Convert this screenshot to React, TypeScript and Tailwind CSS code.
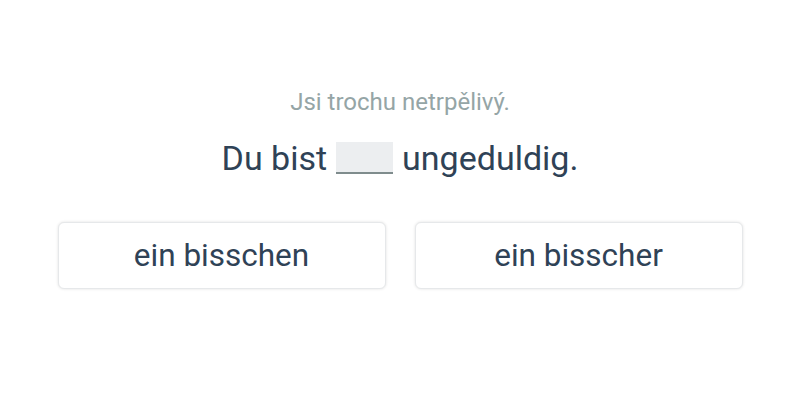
export default function App() {
  return (
    <div className="flex h-[400px] w-[800px] flex-col items-center bg-white font-['Roboto',sans-serif]">
      <p className="mt-[87px] text-[24px] leading-[30px] text-[#95a5a6]">Jsi trochu netrpělivý.</p>
      <div className="mt-[21px] flex h-[40px] items-center text-[34px] leading-[40px] text-[#2f4256]">
        <span>Du bist</span>
        <span className="mx-[9px] inline-block h-[32px] w-[57px] border-b-2 border-[#7f8c8d] bg-[#eceef0]" />
        <span>ungeduldig.</span>
      </div>
      <div className="mt-[44px] flex gap-[29px]">
        {["ein bisschen", "ein bisscher"].map((t) => (
          <button
            key={t}
            type="button"
            className="flex h-[67px] w-[328px] items-center justify-center rounded-[6px] border border-[#e6e8ea] bg-white text-[31.5px] text-[#2f4256] shadow-[0_0_3px_rgba(0,0,0,0.12)]"
          >
            {t}
          </button>
        ))}
      </div>
    </div>
  );
}
